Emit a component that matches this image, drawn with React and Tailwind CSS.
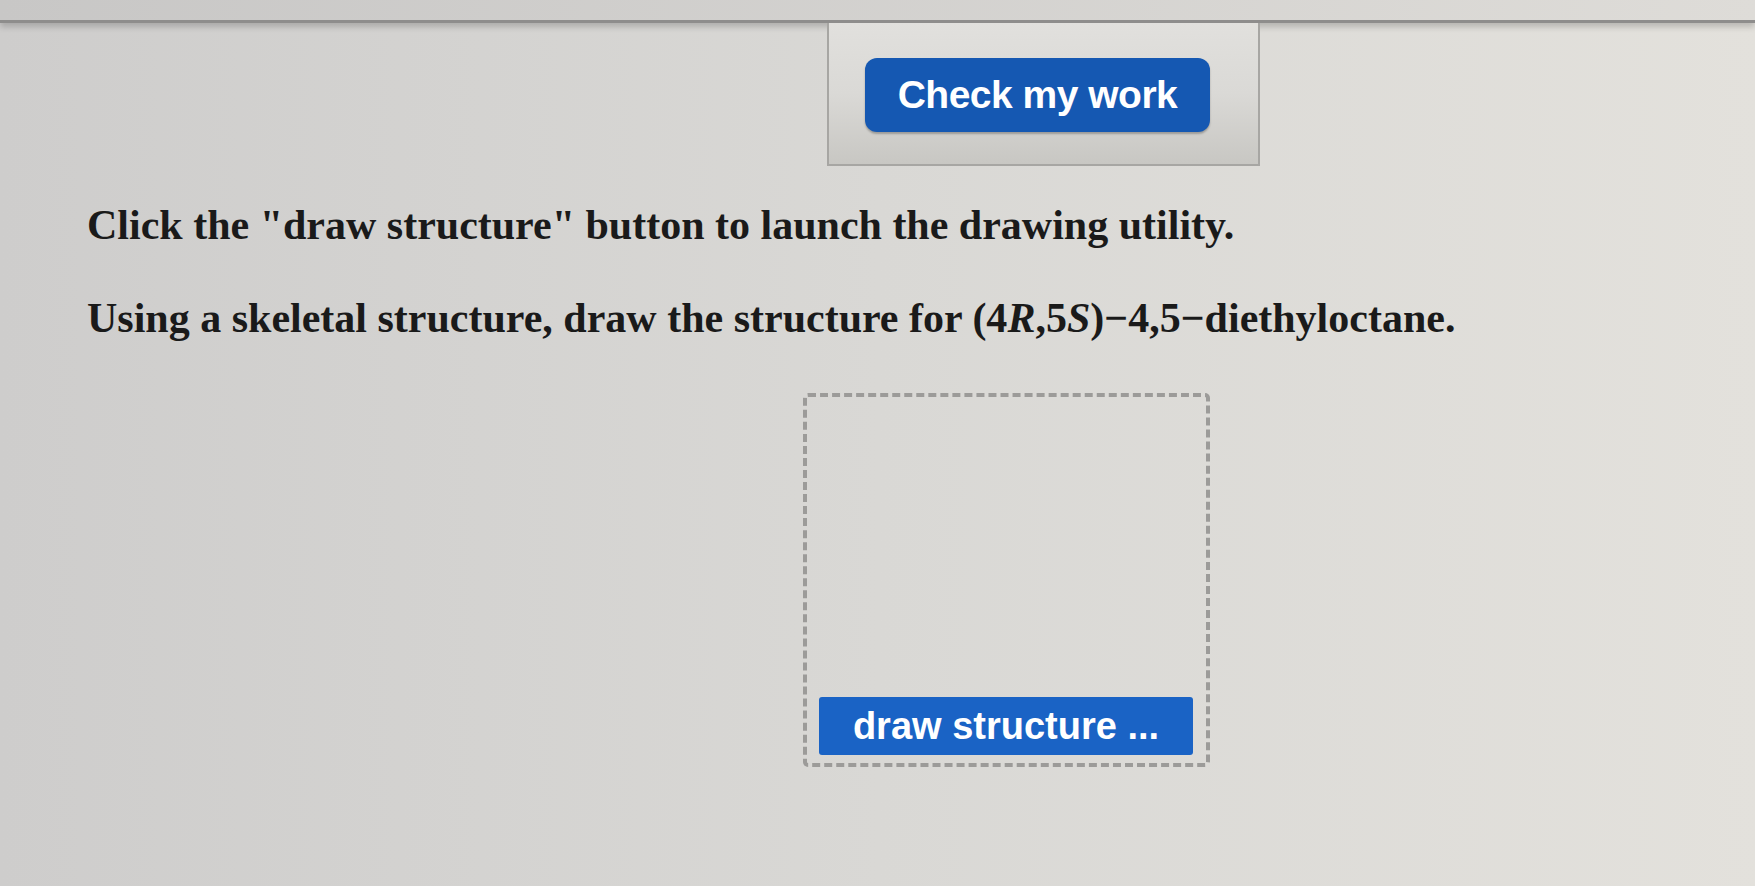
import React from "react";

function App() {
  return (
    <div className="w-full h-[886px] overflow-hidden bg-gradient-to-r from-[#cecdcc] via-[#d9d8d5] to-[#e3e1dc] text-[#1a1a1a]">
      <div className="h-[23px] bg-gradient-to-r from-[#c8c7c6] to-[#dedcd8] border-b-[3px] border-[#8e8d8c] shadow-[0_4px_6px_rgba(0,0,0,0.18)]" />
      <div className="pl-[827px]">
        <div className="w-[433px] h-[143px] pl-[36px] pt-[35px] border-2 border-t-0 border-[#a7a6a3] bg-gradient-to-b from-[#e1e0dd] via-[#dad9d6] to-[#c8c7c3]">
          <button className="w-[345px] h-[74px] rounded-[12px] bg-[#1558b2] shadow-[0_2px_2px_rgba(0,0,0,0.25)] flex items-center justify-center text-white font-bold text-[39px] tracking-[-0.5px] font-['Liberation_Sans',Arial,sans-serif]">
            Check my work
          </button>
        </div>
      </div>
      <div className="pl-[87px] font-['Liberation_Serif','Times_New_Roman',serif] font-bold text-[42px] leading-[42px]">
        <p className="mt-[38px]">Click the "draw structure" button to launch the drawing utility.</p>
        <p className="mt-[51px]">
          Using a skeletal structure, draw the structure for (4<i>R</i>,5<i>S</i>)−4,5−diethyloctane.
        </p>
      </div>
      <div className="pl-[803px] mt-[54px]">
        <div className="w-[407px] h-[374px] border-4 border-dashed border-[#9c9b99] rounded-[5px] flex flex-col justify-end pl-[12px] pr-[13px] pb-[8px]">
          <button className="w-full h-[58px] rounded-[3px] bg-[#1a63c5] flex items-center justify-center text-white font-bold text-[38px] font-['Liberation_Sans',Arial,sans-serif]">
            draw structure ...
          </button>
        </div>
      </div>
    </div>
  );
}

export default App;
